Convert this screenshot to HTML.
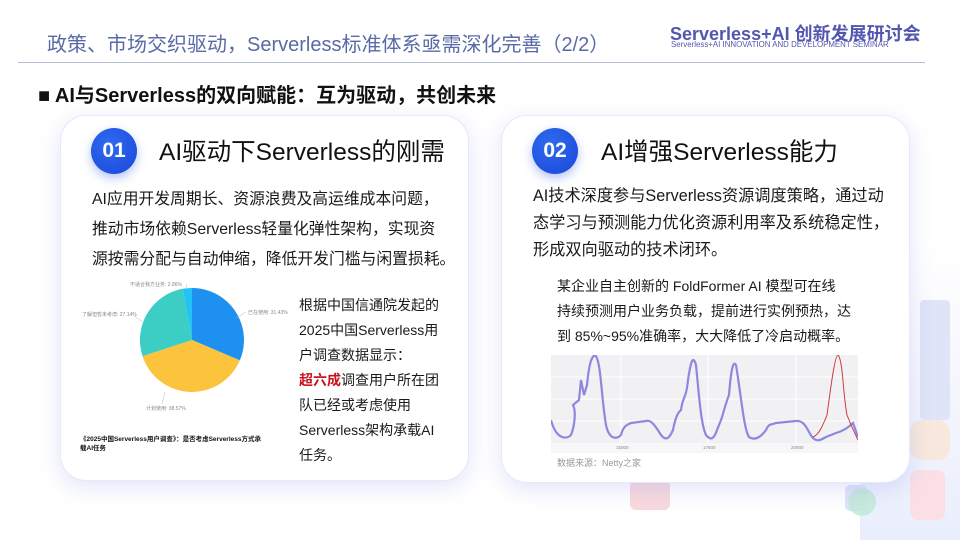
<!DOCTYPE html>
<html><head><meta charset="utf-8"><style>
*{margin:0;padding:0;box-sizing:border-box}
body{width:960px;height:540px;overflow:hidden;background:#fff;font-family:"Liberation Sans","Noto Sans CJK SC",sans-serif;position:relative;color:#111}
.a{position:absolute;white-space:nowrap}
.card{position:absolute;background:#fff;border-radius:26px;border:1.5px solid #e6e8fb;box-shadow:0 6px 22px rgba(120,130,230,.22)}
.num{position:absolute;width:46px;height:46px;border-radius:50%;background:radial-gradient(circle at 40% 35%,#2f6bf0,#1a45d8);color:#fff;font-weight:bold;font-size:21px;text-align:center;line-height:46px;box-shadow:0 4px 10px rgba(40,80,220,.35)}
.h{font-size:24.5px;color:#111}
.b{font-size:15.8px;color:#1a1a1a}
.s{font-size:14px;color:#1a1a1a}
</style></head><body>
<div style="position:absolute;left:860px;top:240px;width:100px;height:300px;background:linear-gradient(180deg,rgba(220,225,250,0),rgba(225,230,250,.7));"></div>
<div style="position:absolute;left:920px;top:300px;width:30px;height:120px;background:#dfe4f7;border-radius:4px"></div>
<div style="position:absolute;left:910px;top:420px;width:40px;height:40px;background:#fbe3cf;border-radius:12px;opacity:.7"></div>
<div style="position:absolute;left:910px;top:470px;width:35px;height:50px;background:#fbdfe5;border-radius:8px"></div>
<div style="position:absolute;left:630px;top:480px;width:40px;height:30px;background:#f8d9dd;border-radius:6px"></div>
<div style="position:absolute;left:845px;top:485px;width:22px;height:26px;background:#dfe4fb;border-radius:5px"></div>
<div style="position:absolute;left:848px;top:488px;width:28px;height:28px;background:#bfe8d6;border-radius:50%;opacity:.8"></div>

<div class="a" style="left:47px;top:28px;font-size:20px;color:#5a6aa6;">政策、市场交织驱动，Serverless标准体系亟需深化完善（2/2）</div>
<div class="a" style="left:670px;top:20px;font-size:18px;font-weight:bold;color:#5356b0;">Serverless+AI 创新发展研讨会</div>
<div class="a" style="left:671px;top:40px;font-size:7.9px;color:#5356b0;">Serverless+AI INNOVATION AND DEVELOPMENT SEMINAR</div>
<div style="position:absolute;left:18px;top:62px;width:907px;height:1px;background:#b8bed4"></div>

<div class="a" style="left:38px;top:79px;font-size:20px;font-weight:bold;">■ AI与Serverless的双向赋能：互为驱动，共创未来</div>

<div class="card" style="left:60px;top:115px;width:409px;height:366px"></div>
<div class="num" style="left:91px;top:128px">01</div>
<div class="a h" style="left:159px;top:133px">AI驱动下Serverless的刚需</div>
<div class="a b" style="left:92px;top:186px">AI应用开发周期长、资源浪费及高运维成本问题，</div>
<div class="a b" style="left:92px;top:216px">推动市场依赖Serverless轻量化弹性架构，实现资</div>
<div class="a b" style="left:92px;top:246px">源按需分配与自动伸缩，降低开发门槛与闲置损耗。</div>

<svg style="position:absolute;left:60px;top:270px" width="240" height="200">
<g transform="translate(-60,-270)">
<path d="M192,340 L192,288 A52,52 0 0 1 239.8,360.4Z" fill="#1e90f0"/>
<path d="M192,340 L239.8,360.4 A52,52 0 0 1 142.5,356.1Z" fill="#fcc33d"/>
<path d="M192,340 L142.5,356.1 A52,52 0 0 1 182.7,288.8Z" fill="#3ccdc4"/>
<path d="M192,340 L182.7,288.8 A52,52 0 0 1 192,288Z" fill="#22c3f5"/>
<g font-size="5" fill="#888" font-family="Liberation Sans,Noto Sans CJK SC,sans-serif">
<text x="130" y="286">不适合我方业务: 2.86%</text>
<text x="248" y="314">已在使用: 31.43%</text>
<text x="82" y="316">了解但暂未考虑: 27.14%</text>
<text x="146" y="410">计划使用: 38.57%</text>
</g>
<g fill="none" stroke="#bbb" stroke-width=".5"><path d="M186,284 L187,289"/><path d="M246,312 L236,318"/><path d="M134,316 L143,322"/><path d="M162,404 L165,392"/></g>
<text x="80" y="441" font-size="6.5" font-weight="bold" fill="#111" font-family="Liberation Sans,Noto Sans CJK SC,sans-serif">《2025中国Serverless用户调查》：是否考虑Serverless方式承</text>
<text x="80" y="450" font-size="6.5" font-weight="bold" fill="#111" font-family="Liberation Sans,Noto Sans CJK SC,sans-serif">载AI任务</text>
</g></svg>

<div class="a s" style="left:299px;top:295px">根据中国信通院发起的</div>
<div class="a s" style="left:299px;top:320px">2025中国Serverless用</div>
<div class="a s" style="left:299px;top:345px">户调查数据显示：</div>
<div class="a s" style="left:299px;top:370px"><b style="color:#c8141e">超六成</b>调查用户所在团</div>
<div class="a s" style="left:299px;top:395px">队已经或考虑使用</div>
<div class="a s" style="left:299px;top:420px">Serverless架构承载AI</div>
<div class="a s" style="left:299px;top:445px">任务。</div>

<div class="card" style="left:501px;top:115px;width:409px;height:368px"></div>
<div class="num" style="left:532px;top:128px">02</div>
<div class="a h" style="left:601px;top:133px">AI增强Serverless能力</div>
<div class="a b" style="left:533px;top:182px;font-size:16.2px">AI技术深度参与Serverless资源调度策略，通过动</div>
<div class="a b" style="left:533px;top:209px;font-size:16.2px">态学习与预测能力优化资源利用率及系统稳定性，</div>
<div class="a b" style="left:533px;top:236px;font-size:16.2px">形成双向驱动的技术闭环。</div>
<div class="a s" style="left:557px;top:276px">某企业自主创新的 FoldFormer AI 模型可在线</div>
<div class="a s" style="left:557px;top:301px">持续预测用户业务负载，提前进行实例预热，达</div>
<div class="a s" style="left:557px;top:326px">到 85%~95%准确率，大大降低了冷启动概率。</div>

<svg style="position:absolute;left:551px;top:355px" width="307" height="98">
<rect width="307" height="98" fill="#f1f1f4"/>
<g stroke="#fff" stroke-width="1"><line x1="70" y1="0" x2="70" y2="88"/><line x1="157" y1="0" x2="157" y2="88"/><line x1="245" y1="0" x2="245" y2="88"/><line x1="0" y1="22" x2="307" y2="22"/><line x1="0" y1="44" x2="307" y2="44"/><line x1="0" y1="66" x2="307" y2="66"/></g>
<path d="M0,65 C5,84 15,85 20,80 C24,70 25,55 22,50 L28,45 30,25 33,40 36,30 C38,10 40,2 44,0 C50,5 50,40 55,70 C58,84 65,85 70,80 C72,72 75,70 80,68 L95,66 C100,64 105,72 110,80 C115,86 118,84 122,75 C124,65 126,58 130,55 C132,40 135,45 137,25 C140,5 142,0 145,10 C148,40 150,70 155,80 C160,86 163,84 166,75 L170,65 C172,60 174,50 178,40 C180,15 182,5 185,10 C190,40 193,75 198,82 C204,86 210,82 215,75 C218,68 220,70 225,68 L245,66 C255,65 257,78 262,83 C266,87 270,85 275,82 L285,78 C292,76 298,72 302,68 L307,82" fill="none" stroke="#7b75d8" stroke-width="2.2" opacity=".85"/>
<path d="M262,82 C268,80 272,70 276,60 C280,30 284,0 287,0 C292,5 292,40 296,60 C300,70 302,75 307,85" fill="none" stroke="#d23a3a" stroke-width="1"/>
<rect y="88" width="307" height="10" fill="#f7f7f9"/>
<g font-size="4.5" fill="#888" font-family="Liberation Sans,sans-serif"><text x="65" y="94">15000</text><text x="152" y="94">17500</text><text x="240" y="94">20000</text></g>
</svg>
<div class="a" style="left:557px;top:456px;font-size:9px;color:#999">数据来源：Netty之家</div>
</body></html>
